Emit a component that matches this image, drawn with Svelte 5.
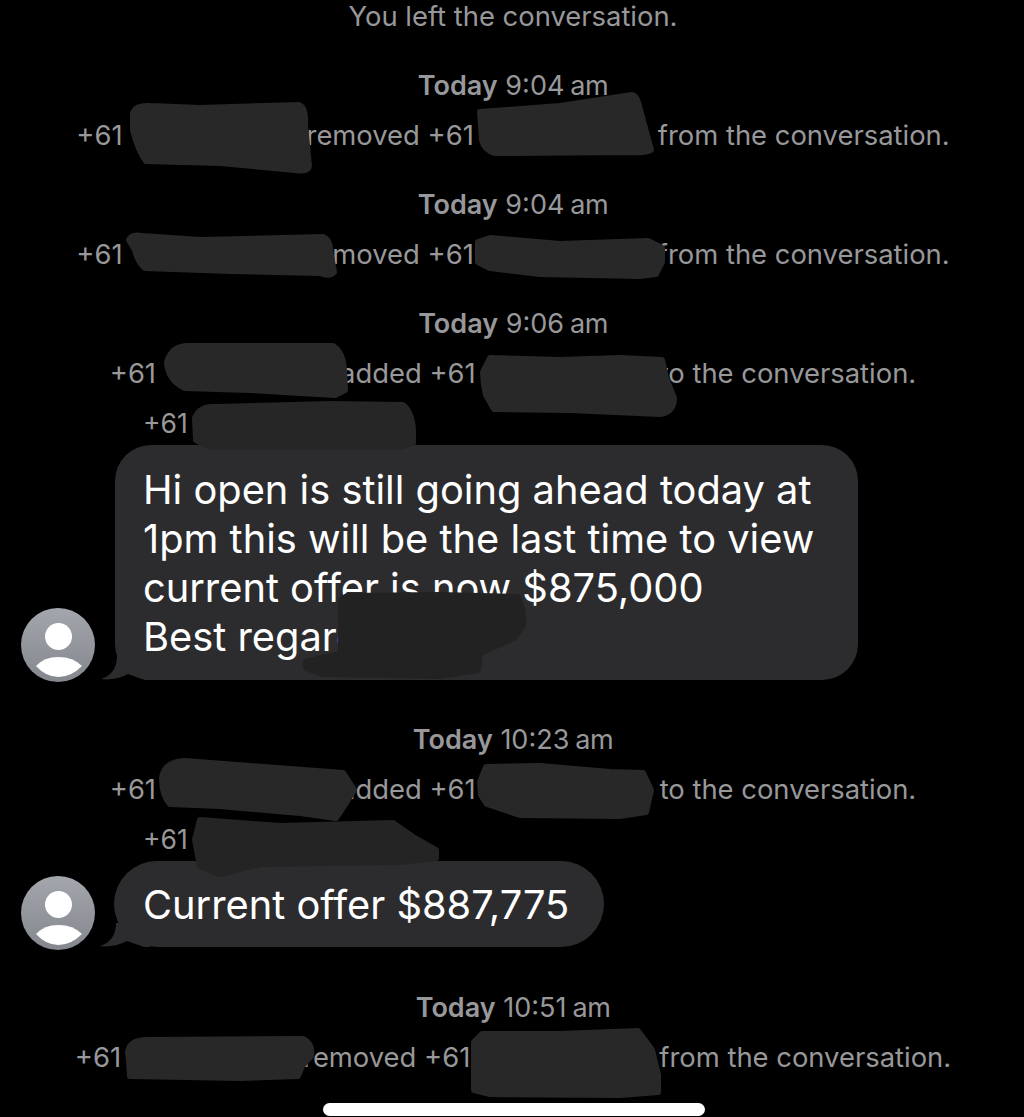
<script>
  const scribbles = [
    { d: 'M133 114 Q135 105 150 106 L200 108 L298 105 Q306 106 305 125 L309 166 Q308 172 295 170 L220 163 L146 161 Q138 150 133 130 Z', fill: '#282828' },
    { d: 'M480 112 L560 106 L632 95 Q637 96 639 106 L651 150 Q648 153 630 152 L495 153 Q484 150 482 140 Z', fill: '#282828' },
    { d: 'M129 240 Q132 234 142 236 L200 240 L323 237 Q330 240 330 250 L334 272 Q330 277 320 273 L230 271 L145 268 Q138 262 135 250 Z', fill: '#282828' },
    { d: 'M478 242 L490 238 L560 244 L648 241 L662 248 L662 262 L656 274 L640 276 L540 274 L490 268 L478 262 Z', fill: '#282828' },
    { d: 'M167 362 Q172 345 190 346 L333 346 Q343 352 344 370 L345 390 L335 395 L250 390 L185 388 Q168 380 167 362 Z', fill: '#282828' },
    { d: 'M483 372 L490 358 L560 360 L620 358 L662 360 L666 378 L674 398 Q674 412 660 414 L570 410 L494 409 L486 395 L484 385 Z', fill: '#282828' },
    { d: 'M195 418 Q200 406 215 407 L330 404 L403 405 Q412 412 413 430 L413 443 L400 447 L210 447 L196 440 Z', fill: '#262626' },
    { d: 'M341 600 L347 596 L440 595 L518 597 Q524 610 523 625 L514 638 L480 653 L478 670 L440 676 L322 674 L306 668 L306 662 L322 658 L341 654 Z', fill: '#222222' },
    { d: 'M162 778 Q164 762 185 761 L250 766 L343 773 L354 790 L344 806 L336 818 L300 813 L220 806 L170 804 Q162 795 162 778 Z', fill: '#282828' },
    { d: 'M480 782 L486 767 L540 766 L610 772 L643 773 L651 790 L646 812 L620 816 L520 815 L487 804 L481 795 Z', fill: '#282828' },
    { d: 'M195 840 L200 820 L280 826 L393 823 L413 837 L436 850 L436 858 L400 862 L260 864 L220 874 L200 866 Z', fill: '#242424' },
    { d: 'M128 1052 Q130 1039 150 1040 L303 1039 Q313 1044 311 1056 L302 1066 L298 1076 L240 1078 L130 1076 L129 1060 Z', fill: '#282828' },
    { d: 'M474 1042 L482 1034 L560 1034 L638 1031 L652 1050 L658 1075 L658 1092 L620 1095 L490 1094 L474 1090 Z', fill: '#282828' }
  ];
</script>

{#snippet avatar()}
  <svg class="avatar" viewBox="0 0 74 74" aria-hidden="true">
    <defs>
      <linearGradient id="avatar-fill" x1="0" y1="0" x2="0" y2="1">
        <stop offset="0" stop-color="#a4a6ae" />
        <stop offset="1" stop-color="#85878f" />
      </linearGradient>
    </defs>
    <circle cx="37" cy="37" r="37" fill="url(#avatar-fill)" />
    <ellipse cx="37.5" cy="28.5" rx="13.5" ry="13.5" fill="#fff" />
    <path d="M15 58 Q23 49 37.5 49 Q52 49 61 58 Q50 69 37.5 69 Q25 69 15 58 Z" fill="#fff" />
  </svg>
{/snippet}

{#snippet tail()}
  <svg class="tail" viewBox="0 0 50 24" aria-hidden="true">
    <path d="M16 0 Q16 18 0 23 Q14 25 27 18 L44 24 L50 24 L50 0 Z" fill="#2c2c2e" />
  </svg>
{/snippet}

{#snippet stamp(time, period)}
  <p class="stamp"><b>Today</b> {time}<span class="period">{period}</span></p>
{/snippet}

{#snippet event(first, gapA, verb, gapB, rest)}
  <p class="event">{first}<span class="gap" style="width: {gapA}px"></span>{verb}<span class="gap" style="width: {gapB}px"></span>{rest}</p>
{/snippet}

<main class="thread">
  <p class="event left">You left the conversation.</p>

  {@render stamp('9:04', 'am')}
  {@render event('+61', 184, 'removed +61', 184, 'from the conversation.')}

  {@render stamp('9:04', 'am')}
  {@render event('+61', 184, 'removed +61', 184, 'from the conversation.')}

  {@render stamp('9:06', 'am')}
  {@render event('+61', 184, 'added +61', 184, 'to the conversation.')}

  <p class="sender">+61</p>
  <div class="message">
    {@render avatar()}
    <div class="bubble">
      {@render tail()}
      Hi open is still going ahead today at<br />
      1pm this will be the last time to view<br />
      current offer is now $875,000<br />
      Best regards
    </div>
  </div>

  {@render stamp('10:23', 'am')}
  {@render event('+61', 184, 'added +61', 184, 'to the conversation.')}

  <p class="sender">+61</p>
  <div class="message short">
    {@render avatar()}
    <div class="bubble">
      {@render tail()}
      Current offer $887,775
    </div>
  </div>

  {@render stamp('10:51', 'am')}
  {@render event('+61', 182, 'removed +61', 189, 'from the conversation.')}

  <div class="home-bar"></div>

  <!-- the marker scribbles sit on top of the thread -->
  <svg class="scribbles" viewBox="0 0 1024 1117" aria-hidden="true">
    {#each scribbles as s}
      <path d={s.d} fill={s.fill} stroke={s.fill} stroke-width="6" stroke-linejoin="round" />
    {/each}
  </svg>
</main>

<style>
  :global(body) {
    background: #000;
  }

  p {
    margin: 0;
  }

  .thread {
    position: relative;
    display: flex;
    flex-direction: column;
    width: 1024px;
    height: 1117px;
    padding-top: 1px;
    box-sizing: border-box;
    overflow: hidden;
    background: #000;
    font-family: Inter, "Liberation Sans", sans-serif;
  }

  .event,
  .stamp {
    height: 30px;
    padding-left: 2px;
    font-size: 27.4px;
    line-height: 30px;
    text-align: center;
    white-space: nowrap;
    color: #98989a;
  }

  .event {
    margin-top: 19px;
  }

  .event.left {
    margin-top: 0;
  }

  .stamp {
    margin-top: 40px;
    font-size: 27px;
  }

  .stamp b {
    font-weight: 600;
  }

  .period {
    margin-left: 6px;
    letter-spacing: -0.5px;
  }

  .gap {
    display: inline-block;
  }

  .sender {
    height: 30px;
    margin-top: 20px;
    padding-left: 143px;
    font-size: 26.5px;
    line-height: 30px;
    color: #98989a;
  }

  .message {
    display: flex;
    align-items: flex-end;
    margin-top: 7px;
    margin-bottom: 5px;
    padding-left: 21px;
  }

  .avatar {
    flex: none;
    width: 74px;
    height: 74px;
    margin-bottom: -2px;
  }

  .bubble {
    position: relative;
    width: 743px;
    height: 235px;
    margin-left: 20px;
    padding: 20px 0 0 28px;
    box-sizing: border-box;
    border-radius: 36px;
    background: #2c2c2e;
    color: #fff;
    font-size: 39.8px;
    line-height: 49px;
    white-space: nowrap;
  }

  .message.short {
    margin-bottom: 6px;
  }

  .message.short .avatar {
    margin-bottom: -3px;
  }

  .message.short .bubble {
    width: 490px;
    height: 86px;
    margin-left: 19px;
    padding: 19px 0 0 29px;
    border-radius: 43px;
  }

  .tail {
    position: absolute;
    left: -14px;
    bottom: 0;
    width: 50px;
    height: 24px;
  }

  .home-bar {
    width: 382px;
    height: 13px;
    margin: auto 0 1px 323px;
    border-radius: 7px;
    background: #fff;
  }

  .scribbles {
    position: absolute;
    top: 0;
    left: 0;
    width: 1024px;
    height: 1117px;
  }
</style>
